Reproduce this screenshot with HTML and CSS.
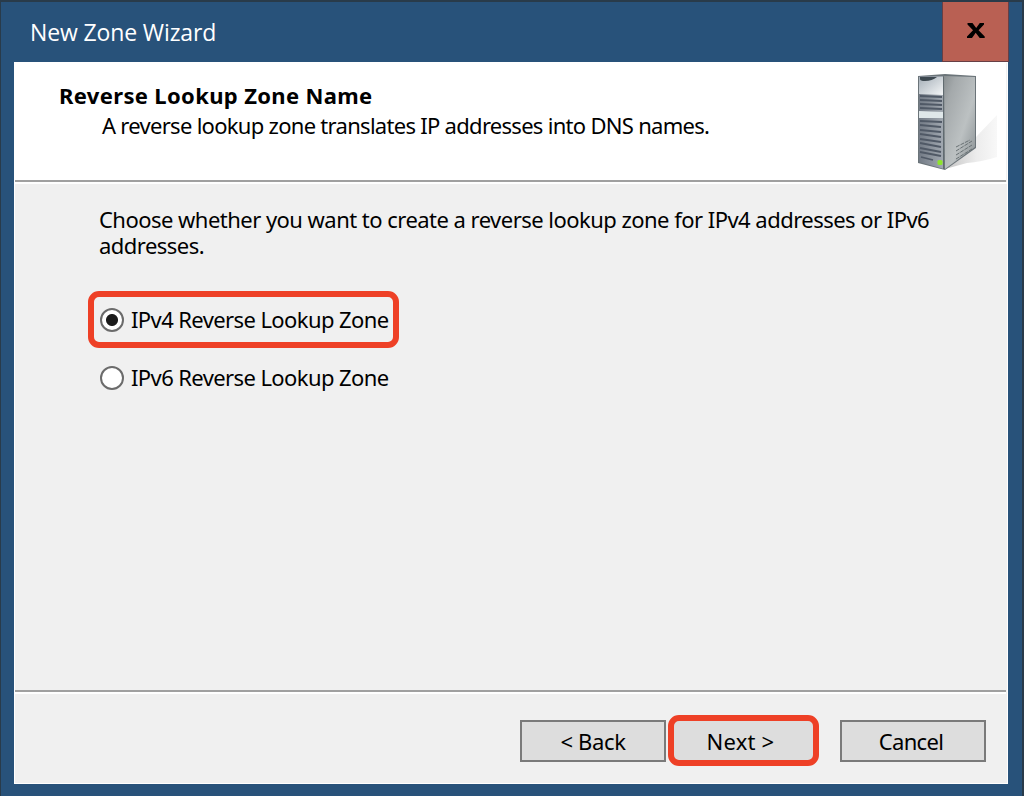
FILE: index.html
```html
<!DOCTYPE html>
<html lang="en">
<head>
    <meta charset="UTF-8">
    <meta name="viewport" content="width=device-width, initial-scale=1.0">
    <title>New Zone Wizard</title>
    <link rel="stylesheet" href="styles.css">
</head>
<body>
    <div class="window">
        <div class="titlebar">
            <span class="title">New Zone Wizard</span>
            <button class="close" aria-label="Close">
                <svg width="20" height="17" viewBox="0 0 20 17"><path d="M1.500 1h5l3.700 4.900L13.800 1H18v1.500L12.600 8.300l6.100 6.200V16h-5l-4-5.200L6 16H1v-1.500l6-6.200L1.500 2.500z" fill="#000"/></svg>
            </button>
        </div>

        <div class="dialog">
            <div class="header">
                <div class="header-text">
                    <h1>Reverse Lookup Zone Name</h1>
                    <p>A reverse lookup zone translates IP addresses into DNS names.</p>
                </div>
                <svg class="server" width="90" height="104" viewBox="0 0 90 104">
                    <defs>
                        <linearGradient id="side" x1="0" y1="0" x2="1" y2="1">
                            <stop offset="0" stop-color="#8a9092"/>
                            <stop offset="0.2" stop-color="#a4a9ab"/>
                            <stop offset="0.6" stop-color="#bcc1c2"/>
                            <stop offset="1" stop-color="#868d90"/>
                        </linearGradient>
                        <linearGradient id="front" x1="0" y1="0" x2="1" y2="0">
                            <stop offset="0" stop-color="#737b86"/>
                            <stop offset="1" stop-color="#a3aab2"/>
                        </linearGradient>
                        <linearGradient id="panel" x1="0" y1="0" x2="1" y2="1">
                            <stop offset="0" stop-color="#a5afb8"/>
                            <stop offset="1" stop-color="#f4f6f7"/>
                        </linearGradient>
                        <linearGradient id="shadow" x1="0" y1="0" x2="1" y2="0">
                            <stop offset="0" stop-color="#c4c4c4"/>
                            <stop offset="0.6" stop-color="#ececec"/>
                            <stop offset="1" stop-color="#f8f8f8"/>
                        </linearGradient>
                    </defs>
                    <path d="M30 99L62 66l20-21v42q-16 5-30 6z" fill="url(#shadow)"/>
                    <path d="M3 6L30 4 61 6 61 78 30 100 3 93z" fill="#6b7479"/>
                    <path d="M29 6L60 7 60 77 30 99z" fill="url(#side)"/>
                    <path d="M4 6L28 6 29 99 4 92z" fill="url(#front)"/>
                    <path d="M4 7h24v18L4 24z" fill="url(#panel)"/>
                    <path d="M5 7h17q-5 4-12 4-5 0-5-2z" fill="#3d4850"/>
                    <path d="M4 41l24 1v6L4 48z" fill="#dfe7e9"/>
                    <path d="M5 26l22 1M5 30l22 1M5 34l22 1M5 38l22 1M5 51l22 1M5 55l21 2M5 60l21 2M5 64l21 3M5 69l21 3M5 73l21 4M5 78l21 4M5 82l21 4M6 87l12 3" stroke="#505966" stroke-width="1.800"/>
                    <path d="M28.500 7v92" stroke="#616b70" stroke-width="1"/>
                    <path d="M41 81l16-10M41 85l16-10M41 89l16-10M41 77l14-7" stroke="#697174" stroke-dasharray="4 1"/>
                    <rect x="22.500" y="90" width="5" height="5" rx="1.500" fill="#8ee52b"/>
                </svg>
            </div>

            <div class="content">
                <p class="intro">Choose whether you want to create a reverse lookup zone for IPv4 addresses or IPv6<br>addresses.</p>
                <label class="option marked"><span class="radio checked"></span><span class="label">IPv4 Reverse Lookup Zone</span></label>
                <label class="option"><span class="radio"></span><span class="label">IPv6 Reverse Lookup Zone</span></label>
            </div>

            <div class="footer">
                <button class="button back">&lt; Back</button>
                <button class="button next">Next &gt;</button>
                <button class="button cancel">Cancel</button>
            </div>
        </div>
    </div>
</body>
</html>
```
FILE: styles.css
```css
* {
    box-sizing: border-box;
}
body {
    margin: 0;
    height: 796px;
    overflow: hidden;
    padding: 2px 2px 0 1px;
    background: #293b4a;
    font-family: 'Noto Sans', Tahoma, sans-serif;
    font-size: 22px;
    color: #000;
}
.window {
    height: 794px;
    padding: 0 13px 11px;
    background: #28527a;
}
.titlebar {
    display: flex;
    justify-content: space-between;
    width: 995px;
    height: 60px;
}
.title {
    padding-left: 16px;
    line-height: 60px;
    font-family: 'Open Sans', 'Segoe UI', sans-serif;
    font-size: 23px;
    letter-spacing: -0.13px;
    color: #fff;
}
.close {
    display: flex;
    justify-content: center;
    align-items: center;
    width: 67px;
    padding: 0 0 2px 1px;
    border: 1px solid #673f45;
    border-top: none;
    background: #b96053;
}
.dialog {
    display: flex;
    flex-direction: column;
    width: 994px;
    height: 722px;
    border: 1px solid #fff;
    background: #f0f0f0;
}
.header {
    display: flex;
    justify-content: space-between;
    height: 119px;
    margin-right: 1px;
    padding: 7px 1px 0 44px;
    border-bottom: 2px solid #a0a0a0;
    background: #fff;
}
h1, p {
    margin: 0;
    white-space: nowrap;
}
h1 {
    margin-top: 10px;
    line-height: 30px;
    font-size: 22px;
    font-weight: bold;
    letter-spacing: 0.35px;
}
.header-text p {
    padding-left: 43px;
    line-height: 30px;
    letter-spacing: -0.71px;
}
.content {
    flex: 1;
    padding: 22px 73px 0;
    border-top: 2px solid #fff;
}
.intro {
    padding-left: 11px;
    line-height: 26px;
    letter-spacing: -0.53px;
}
.option {
    display: flex;
    align-items: center;
    gap: 7px;
    width: 311px;
    height: 57px;
    margin-top: 1px;
    padding-left: 6px;
    border: 6px solid transparent;
    border-radius: 11px;
    letter-spacing: -0.6px;
    white-space: nowrap;
}
.marked {
    margin-top: 33px;
    border-color: #ee4026;
}
.label {
    padding-bottom: 2px;
}
.radio {
    flex-shrink: 0;
    width: 24px;
    height: 24px;
    border: 2px solid #6b6b6b;
    border-radius: 50%;
    background: #fff;
}
.radio.checked {
    background: radial-gradient(circle, #1b1b1b 5.500px, #fff 6.500px);
}
.footer {
    display: flex;
    height: 93px;
    margin-right: 1px;
    padding: 28px 0 0 505px;
    border-top: 2px solid #a0a0a0;
    box-shadow: inset 0 2px #fff;
}
.button {
    flex-shrink: 0;
    width: 146px;
    height: 42px;
    padding: 0;
    border: 2px solid #7a7a7a;
    background: #ddd;
    font: inherit;
    letter-spacing: -0.35px;
}
.back {
    padding-bottom: 1px;
}
.next {
    width: 151px;
    height: 51px;
    margin: -5px 21px 0 2px;
    padding: 1px 6px 0 0;
    border: 6px solid #ee4026;
    border-radius: 11px;
    letter-spacing: 0.2px;
}
.cancel {
    padding: 0 4px 1px 0;
    letter-spacing: -0.7px;
}
```
